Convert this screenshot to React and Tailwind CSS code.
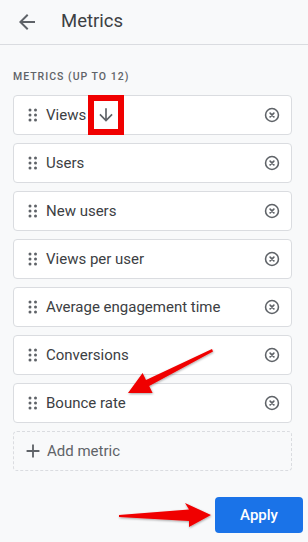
import React from "react";

function DragDots() {
  return (
    <svg width="10" height="14" viewBox="0 0 10 14" className="shrink-0">
      {[2, 7, 12].map((y) =>
        [2, 7.5].map((x) => <circle key={x + "-" + y} cx={x} cy={y} r="1.5" fill="#5f6368" />)
      )}
    </svg>
  );
}

function CloseCircle() {
  return (
    <svg width="18" height="18" viewBox="0 0 24 24" className="shrink-0">
      <circle cx="12" cy="12" r="8.6" fill="none" stroke="#5f6368" strokeWidth="2.1" />
      <path d="M9.5 9.5 L14.5 14.5 M14.5 9.5 L9.5 14.5" stroke="#5f6368" strokeWidth="2.2" strokeLinecap="round" />
    </svg>
  );
}

function Row({ label, children }) {
  return (
    <div className="h-[40px] flex items-center bg-white border border-[#dadce0] rounded-[4px] pl-[14px] pr-[10px]">
      <DragDots />
      <span className="ml-[8px] text-[15px] text-[#3c4043] leading-none">{label}</span>
      {children}
      <div className="ml-auto flex items-center">
        <CloseCircle />
      </div>
    </div>
  );
}

export default function App() {
  const items = ["Users", "New users", "Views per user", "Average engagement time", "Conversions", "Bounce rate"];
  return (
    <div
      className="relative w-[308px] h-[542px] bg-[#f8f9fa] flex flex-col overflow-hidden"
      style={{ fontFamily: "Roboto, 'Open Sans', sans-serif" }}
    >
      <div className="h-[45px] shrink-0 border-b border-[#dadce0] flex items-center pl-[15px]">
        <svg width="24" height="24" viewBox="0 0 24 24">
          <path d="M20 11H7.83l5.59-5.59L12 4l-8 8 8 8 1.41-1.41L7.83 13H20v-2z" fill="#5f6368" />
        </svg>
        <span className="ml-[22px] text-[18.5px] text-[#3c4043]">Metrics</span>
      </div>

      <div className="pl-[13px] pr-[16px] pt-[26px] flex flex-col">
        <div className="text-[10.5px] font-medium tracking-[1px] text-[#5f6368] leading-[12px] mb-[12px]">
          METRICS (UP TO 12)
        </div>
        <div className="flex flex-col gap-[8px]">
          <Row label="Views">
            <span className="ml-[2px] w-[36px] h-[40px] border-[6px] border-[#f00000] bg-white flex items-center justify-center">
              <svg width="20" height="20" viewBox="0 0 24 24">
                <path d="M20 12l-1.41-1.41L13 16.17V4h-2v12.17l-5.58-5.59L4 12l8 8 8-8z" fill="#5f6368" />
              </svg>
            </span>
          </Row>
          {items.map((t) => (
            <Row key={t} label={t} />
          ))}
          <div className="h-[40px] flex items-center border border-dashed border-[#dadce0] rounded-[4px] pl-[8px]">
            <svg width="22" height="22" viewBox="0 0 24 24">
              <path d="M19 13h-6v6h-2v-6H5v-2h6V5h2v6h6v2z" fill="#5f6368" />
            </svg>
            <span className="ml-[3px] text-[15px] text-[#5f6368] leading-none">Add metric</span>
          </div>
        </div>
      </div>

      <div className="flex justify-end pr-[5px] mt-[26px]">
        <button className="w-[88px] h-[36px] rounded-[4px] bg-[#1a73e8] text-white text-[15px] font-medium">
          Apply
        </button>
      </div>

      <svg className="absolute left-0 top-0 pointer-events-none" width="308" height="542" viewBox="0 0 308 542">
        <defs>
          <filter id="sh" x="-10%" y="-10%" width="120%" height="130%">
            <feDropShadow dx="0.5" dy="1" stdDeviation="0.8" floodColor="#000" floodOpacity="0.35" />
          </filter>
        </defs>
        <polygon
          points="212,349 146,380 142.6,373 128,393 152.6,393 149.2,386 213,351.5"
          fill="#f00000"
          filter="url(#sh)"
        />
        <polygon
          points="119,515 189,509.5 185,503 211,515 189,527 189,521 119,517"
          fill="#f00000"
          filter="url(#sh)"
        />
      </svg>
    </div>
  );
}
